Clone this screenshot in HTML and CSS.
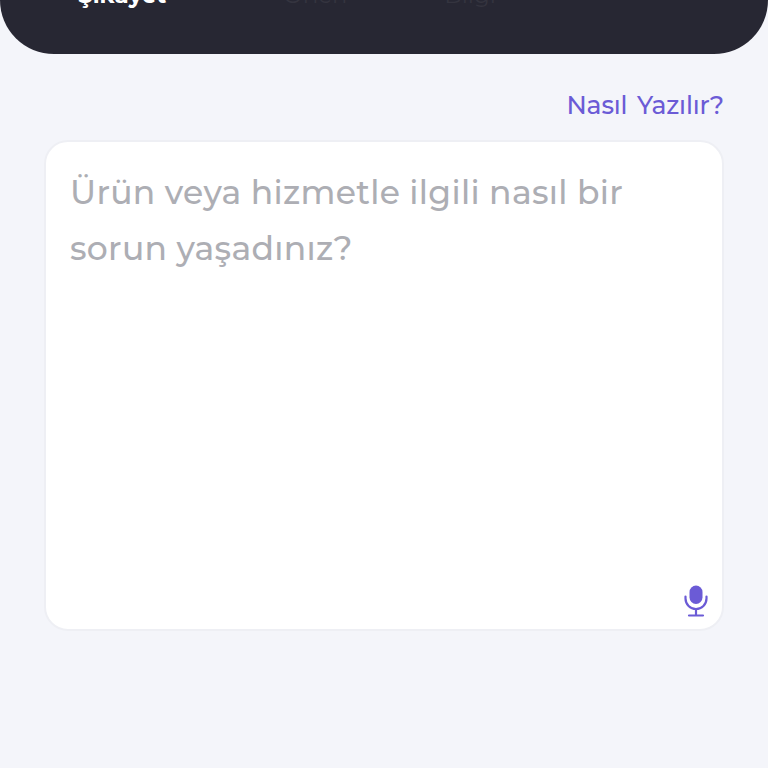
FILE: index.html
```html
<!DOCTYPE html>
<html lang="tr">
<head>
<meta charset="utf-8">
<title>Şikayet</title>
<link rel="stylesheet" href="styles.css">
</head>
<body>
<header class="header">
  <nav class="tabs">
    <span class="tab tab-active">Şikayet</span>
    <span class="tab">Öneri</span>
    <span class="tab">Bilgi</span>
  </nav>
</header>
<main class="main">
  <div class="help-row"><a class="help">Nasıl Yazılır?</a></div>
  <section class="card">
    <p class="placeholder">Ürün veya hizmetle ilgili nasıl bir sorun yaşadınız?</p>
    <div class="mic-row">
      <svg class="mic" viewBox="0 0 24 32" width="24" height="32" aria-hidden="true">
        <rect x="5.500" y="0.500" width="13" height="18.500" rx="6.500" fill="#6b5bd6"/>
        <path d="M1.500 11.500v2a10.500 10.500 0 0 0 21 0v-2" fill="none" stroke="#6b5bd6" stroke-width="2.200" stroke-linecap="round"/>
        <path d="M12 24v6.500M5 30.500h14" fill="none" stroke="#6b5bd6" stroke-width="2.200" stroke-linecap="round"/>
      </svg>
    </div>
  </section>
</main>
</body>
</html>
```
FILE: styles.css
```css
* { box-sizing: border-box; }
html, body { margin: 0; padding: 0; }
body {
  width: 768px;
  height: 768px;
  overflow: hidden;
  background: #f4f5fa;
  font-family: "Montserrat", Lato, "Open Sans", sans-serif;
}
.header {
  height: 54px;
  background: #272733;
  border-radius: 0 0 54px 54px;
  overflow: hidden;
  position: relative;
}
.tabs {
  display: flex;
  gap: 97px;
  margin-top: -16px;
  padding-left: 78px;
  font-size: 23px;
  line-height: 22px;
}
.tab { color: #34343f; }
.tab-active { color: #fff; font-weight: 700; margin-right: 20px; }
.main { padding: 35px 44px 0; }
.help-row { display: flex; justify-content: flex-end; height: 51px; }
.help { color: #6b5bd6; font-size: 25px; line-height: 32px; word-spacing: 3px; font-weight: 500; letter-spacing: -0.15px; }
.card {
  height: 491px;
  background: #fff;
  border: 2px solid #eeeff4;
  border-radius: 24px;
  padding: 22px 14px 12px 24px;
  display: flex;
  flex-direction: column;
}
.placeholder {
  margin: 0;
  flex: 1;
  color: #adaeb4;
  font-size: 33px;
  font-weight: 500;
  line-height: 56px;
  letter-spacing: 0.3px;
  padding-right: 40px;
}
.mic-row { display: flex; justify-content: flex-end; }
```
